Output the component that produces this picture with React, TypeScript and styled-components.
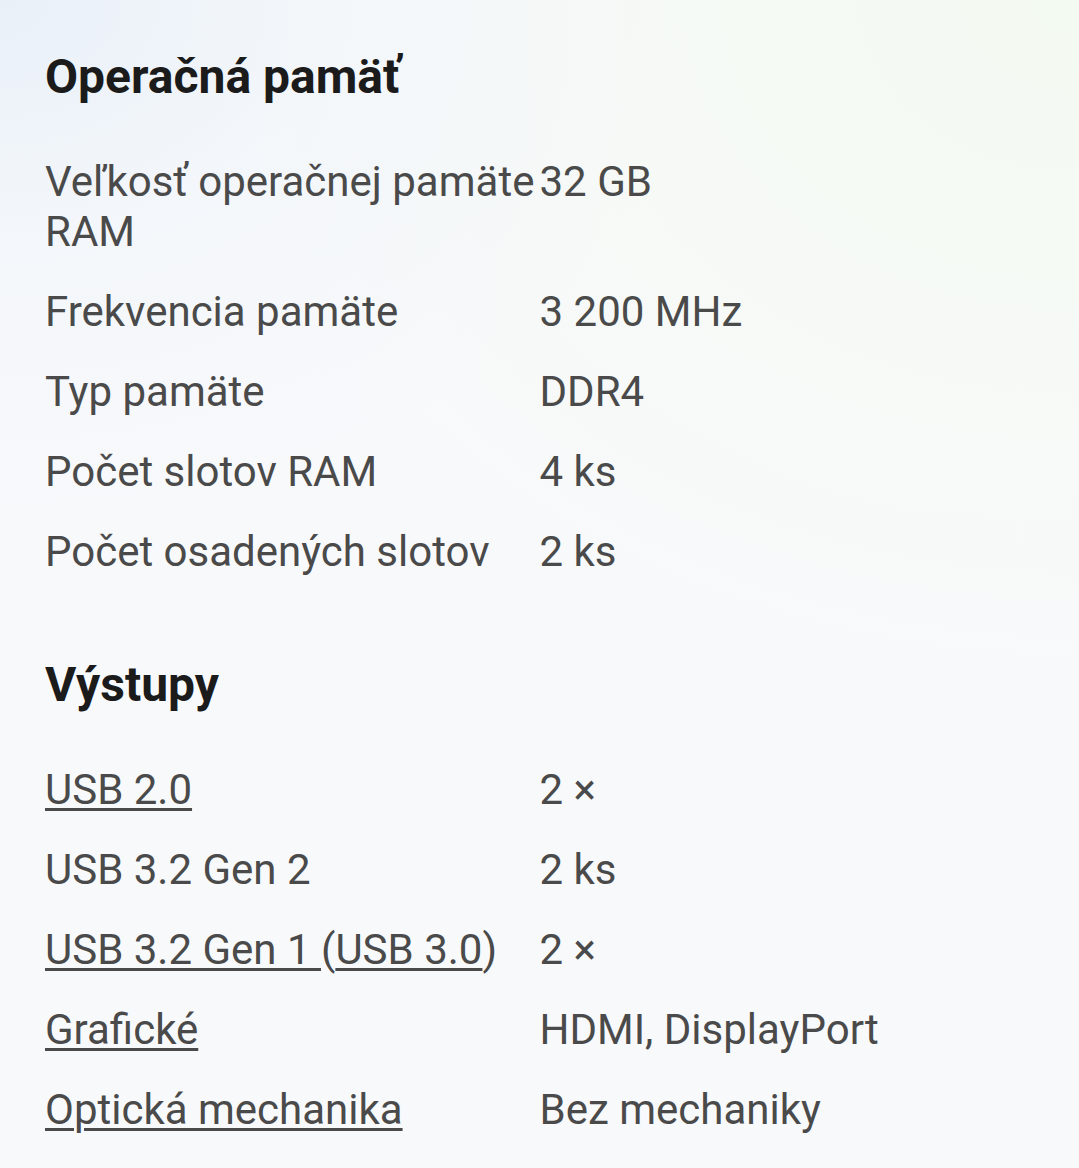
import React from "react";
import styled, { createGlobalStyle } from "styled-components";

const Global = createGlobalStyle`
  html, body { margin: 0; padding: 0; }
  body {
    font-family: Roboto, "Noto Sans", "Liberation Sans", sans-serif;
    background: #f8f9fb;
  }
`;

const Page = styled.main`
  min-height: 1168px;
  box-sizing: border-box;
  padding: 47px 45px 0;
  background:
    radial-gradient(ellipse 700px 520px at 0% 0%, #e9f0f8 0%, rgba(240,245,250,0.6) 45%, rgba(248,249,251,0) 100%),
    radial-gradient(ellipse 900px 700px at 100% 0%, #f3faf1 0%, rgba(245,250,243,0.7) 45%, rgba(248,249,251,0) 100%),
    #f8f9fb;
`;

const Section = styled.section`
  display: flex;
  flex-direction: column;
  & + & { margin-top: 63px; }
`;

const Heading = styled.h2`
  margin: 0 0 35px;
  font-size: 48px;
  line-height: 60px;
  font-weight: 700;
  color: #1b1b1b;
`;

const Row = styled.div`
  display: grid;
  grid-template-columns: 1fr 1fr;
  padding: 15px 0;
  font-size: 42px;
  line-height: 50px;
  color: #4a4a4a;
`;

const Label = styled.div``;
const Value = styled.div``;

const Link = styled.a`
  color: inherit;
  text-decoration: underline;
  text-decoration-thickness: 3px;
  text-underline-offset: 4px;
`;

type Spec = { label: React.ReactNode; value: string };

const memory: Spec[] = [
  { label: "Veľkosť operačnej pamäte RAM", value: "32 GB" },
  { label: "Frekvencia pamäte", value: "3 200 MHz" },
  { label: "Typ pamäte", value: "DDR4" },
  { label: "Počet slotov RAM", value: "4 ks" },
  { label: "Počet osadených slotov", value: "2 ks" },
];

const outputs: Spec[] = [
  { label: <Link href="#">USB 2.0</Link>, value: "2 ×" },
  { label: "USB 3.2 Gen 2", value: "2 ks" },
  {
    label: (
      <>
        <Link href="#">USB 3.2 Gen 1 </Link>(<Link href="#">USB 3.0</Link>)
      </>
    ),
    value: "2 ×",
  },
  { label: <Link href="#">Grafické</Link>, value: "HDMI, DisplayPort" },
  { label: <Link href="#">Optická mechanika</Link>, value: "Bez mechaniky" },
];

const SpecSection = ({ title, items }: { title: string; items: Spec[] }) => (
  <Section>
    <Heading>{title}</Heading>
    {items.map((s, i) => (
      <Row key={i}>
        <Label>{s.label}</Label>
        <Value>{s.value}</Value>
      </Row>
    ))}
  </Section>
);

export default function App() {
  return (
    <>
      <Global />
      <Page>
        <SpecSection title="Operačná pamäť" items={memory} />
        <SpecSection title="Výstupy" items={outputs} />
      </Page>
    </>
  );
}
